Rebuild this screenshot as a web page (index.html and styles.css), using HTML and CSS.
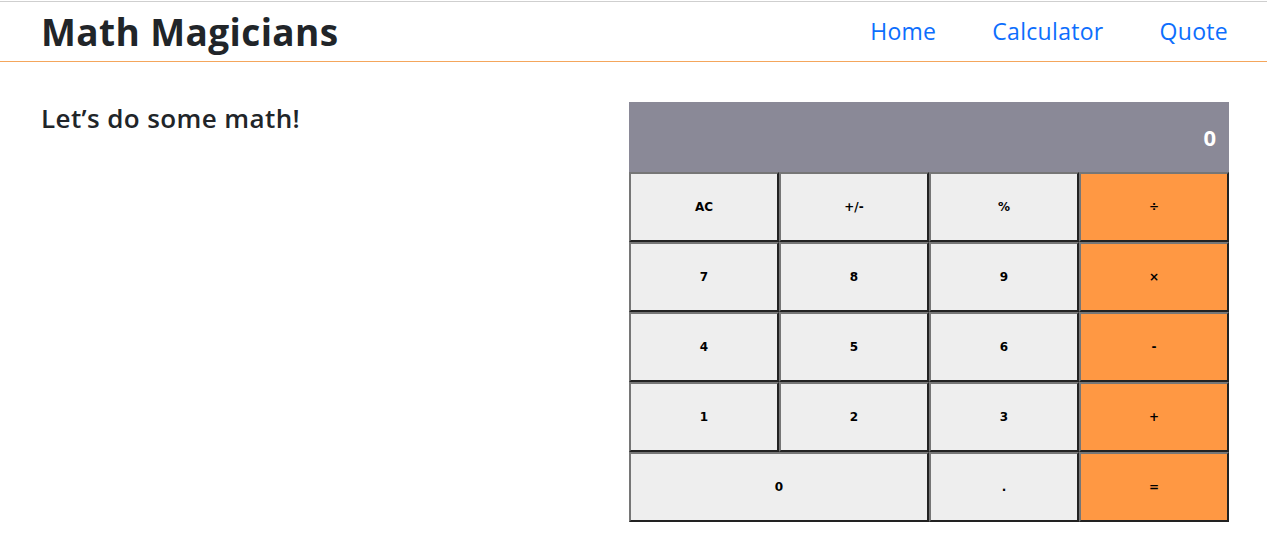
FILE: index.html
```html
<!DOCTYPE html>
<html lang="en">
<head>
<meta charset="utf-8">
<title>Math Magicians</title>
<link rel="stylesheet" href="styles.css">
</head>
<body>
<header class="header">
  <div class="header-inner">
    <h1 class="brand">Math Magicians</h1>
    <nav class="nav">
      <a href="#" class="nav-link">Home</a>
      <a href="#" class="nav-link">Calculator</a>
      <a href="#" class="nav-link">Quote</a>
    </nav>
  </div>
</header>
<main class="main">
  <h2 class="intro">Let’s do some math!</h2>
  <div class="calculator">
    <div class="display">0</div>
    <button class="key">AC</button>
    <button class="key">+/-</button>
    <button class="key">%</button>
    <button class="key op">÷</button>
    <button class="key">7</button>
    <button class="key">8</button>
    <button class="key">9</button>
    <button class="key op">×</button>
    <button class="key">4</button>
    <button class="key">5</button>
    <button class="key">6</button>
    <button class="key op">-</button>
    <button class="key">1</button>
    <button class="key">2</button>
    <button class="key">3</button>
    <button class="key op">+</button>
    <button class="key wide">0</button>
    <button class="key">.</button>
    <button class="key op">=</button>
  </div>
</main>
</body>
</html>
```
FILE: styles.css
```css
* { box-sizing: border-box; }
html, body { margin: 0; padding: 0; background: #fff; }
body {
  font-family: "Open Sans", "Noto Sans", sans-serif;
  color: #212529;
}
.header {
  margin-top: 1px;
  border-top: 1px solid #cfcfcf;
  border-bottom: 1px solid #f4a65c;
}
.header-inner {
  height: 59px;
  padding: 0 38px 0 41px;
  display: flex;
  align-items: center;
  justify-content: space-between;
}
.brand {
  margin: -1px 0 0;
  font-size: 37px;
  font-weight: 700;
  letter-spacing: 0.4px;
  line-height: 1;
}
.nav {
  display: flex;
  gap: 56px;
  margin-top: -2px;
  margin-right: 1px;
}
.nav-link {
  color: #0d6efd;
  text-decoration: none;
  font-size: 23px;
  letter-spacing: 0.3px;
}
.main {
  padding: 40px 38px 0 41px;
  display: flex;
  justify-content: space-between;
  align-items: flex-start;
}
.intro {
  margin: 0;
  font-size: 26px;
  font-weight: 600;
  letter-spacing: 0.4px;
  line-height: 1.3;
}
.calculator {
  width: 600px;
  display: grid;
  grid-template-columns: repeat(4, 1fr);
  grid-auto-rows: 70px;
}
.display {
  grid-column: 1 / -1;
  background: #8a8997;
  color: #fff;
  font-weight: 700;
  font-size: 22px;
  display: flex;
  align-items: center;
  justify-content: flex-end;
  padding-right: 13px;
}
.key {
  font-family: "DejaVu Sans", sans-serif;
  font-weight: 700;
  font-size: 12px;
  color: #000;
  background: #eeeeee;
  border: 2px solid;
  border-color: #767676 #222 #222 #767676;
  margin: 0;
  padding: 0;
}
.key.op { background: #ff9843; }
.key.wide { grid-column: span 2; }
```
